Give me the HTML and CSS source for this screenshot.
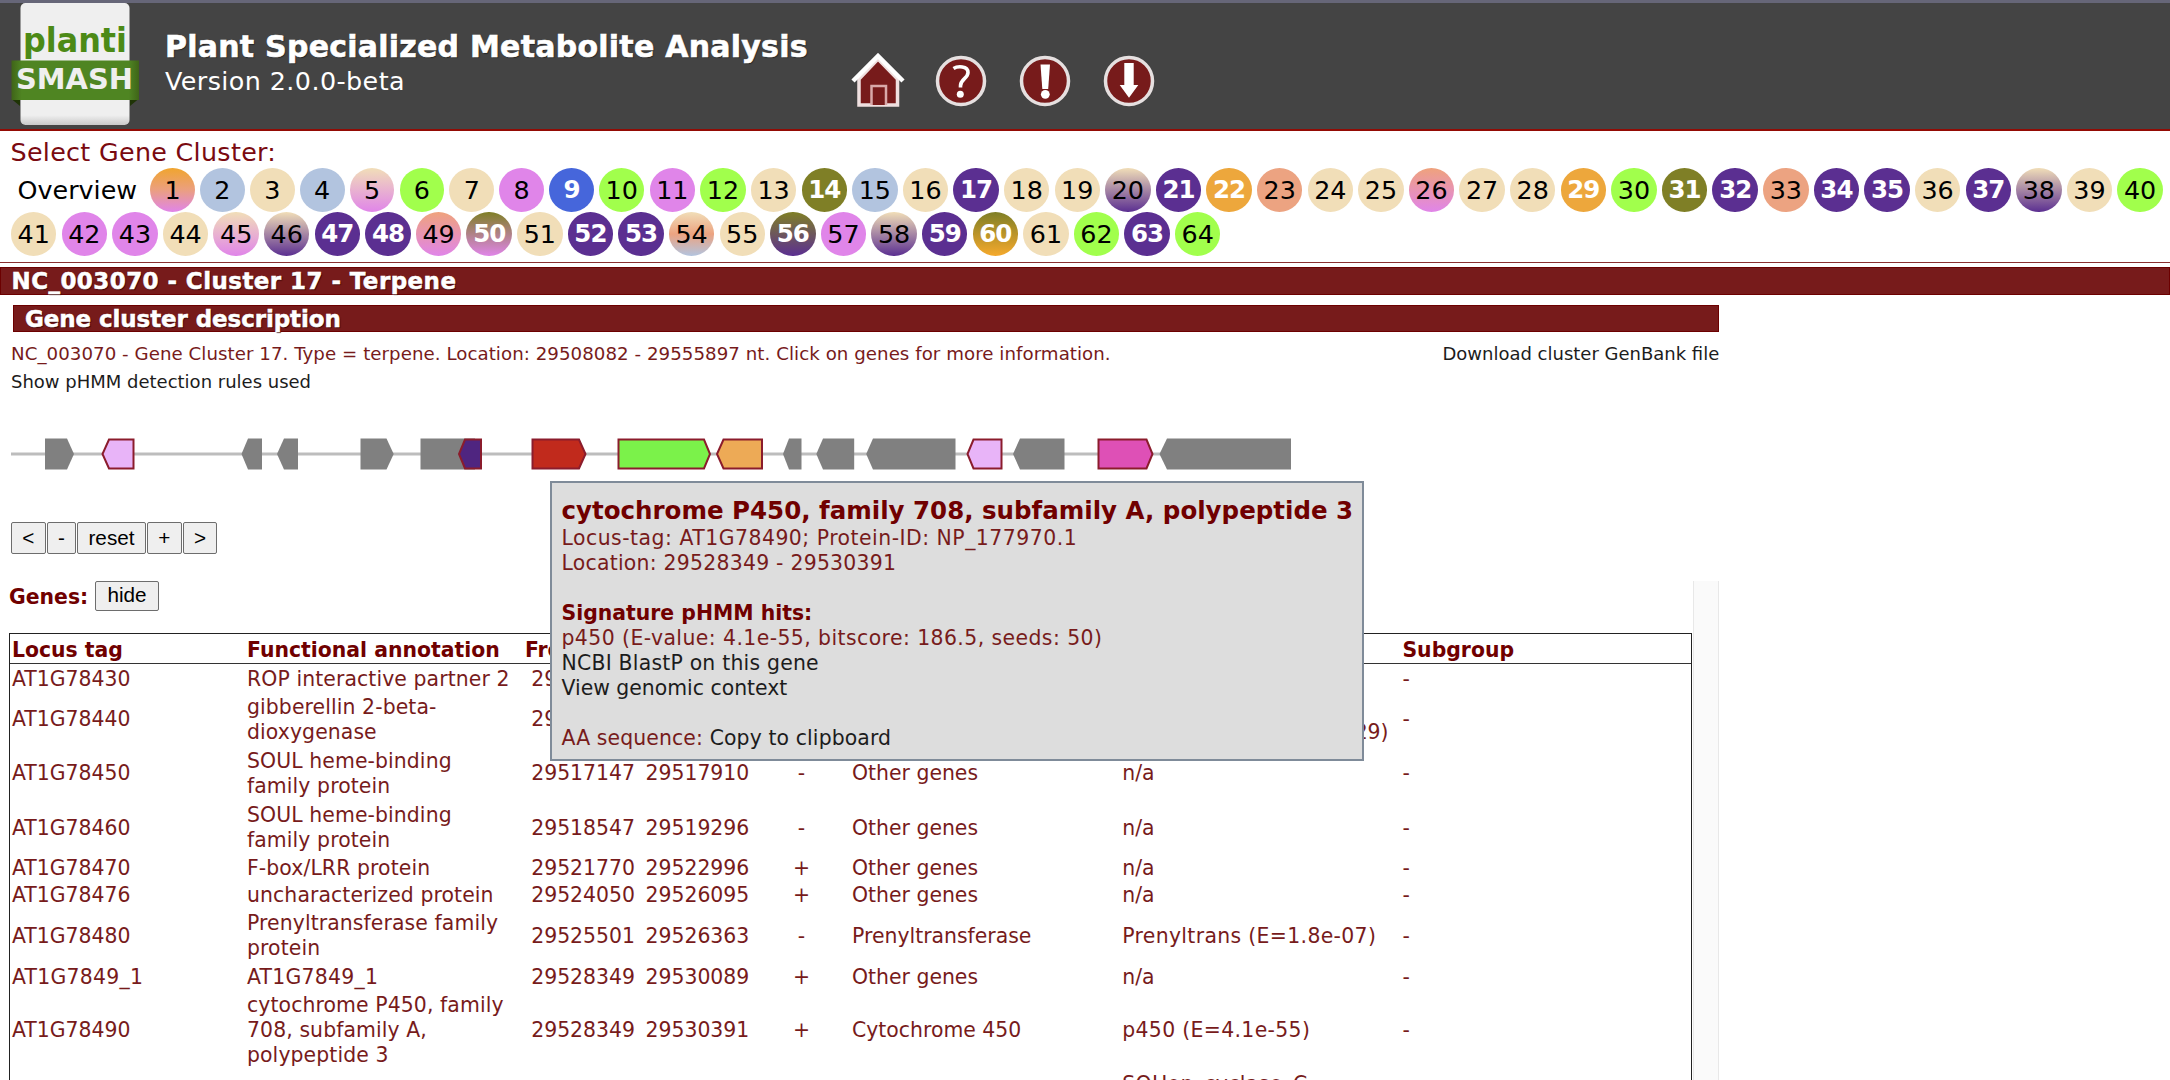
FILE: index.html
```
<!DOCTYPE html>
<html lang="en">
<head>
<meta charset="utf-8">
<title>plantiSMASH - Plant Specialized Metabolite Analysis</title>
<link rel="stylesheet" href="styles.css">
</head>
<body>
<header class="header">
  <svg class="logo" width="130" height="125" viewBox="0 0 130 125">
    <defs>
      <linearGradient id="card" x1="0" y1="0" x2="0" y2="1"><stop offset=".92" stop-color="#efefef"/><stop offset="1" stop-color="#c9c9c9"/></linearGradient>
      <linearGradient id="ribbon"><stop offset="0" stop-color="#3f6418"/><stop offset=".08" stop-color="#4f8522"/><stop offset=".92" stop-color="#4f8522"/><stop offset="1" stop-color="#3f6418"/></linearGradient>
    </defs>
    <path d="M1.500 96 L10 96 L10 103 Z M120 96 L128.500 96 L120 103 Z" fill="#1f3406"/>
    <rect x="10.500" y="0" width="109" height="122" rx="5" fill="url(#card)"/>
    <rect x="1.500" y="57.500" width="127.500" height="39.500" fill="url(#ribbon)"/>
    <text class="logo-text" x="13" y="49" font-size="33" textLength="104" lengthAdjust="spacingAndGlyphs" fill="#4c8a16">planti</text>
    <text class="logo-text" x="6" y="86" font-size="29" textLength="117" lengthAdjust="spacingAndGlyphs" fill="#efefef">SMASH</text>
  </svg>
  <div class="heading">
    <h1 class="title">Plant Specialized Metabolite Analysis</h1>
    <div class="version">Version 2.0.0-beta</div>
  </div>
  <nav class="icons">
    <svg class="icon" viewBox="-27 -28 54 56"><path d="M-19 -2V24H19.500V-2L0 -22Z" fill="#771b1b" stroke="#efe0e0" stroke-width="3.500"/><path d="M-6.500 24V5H8V24" fill="#771b1b" stroke="#d9a9a9" stroke-width="2.500"/><path d="M-25 0L0 -25L25 0" fill="none" stroke="#fff" stroke-width="4.500"/></svg>
    <svg class="icon" viewBox="-27 -28 54 56"><circle r="23.500" fill="#771b1b" stroke="#e6e0e0" stroke-width="3.500"/><path d="M-7.500 -12.500C-3.500 -15 7 -15.500 7 -8.500C7 -2.500 -.5 -2 -.5 5V6.500" fill="none" stroke="#fff" stroke-width="3.600"/><circle cx="-.7" cy="13.300" r="3.500" fill="#fff"/></svg>
    <svg class="icon" viewBox="-27 -28 54 56"><circle r="23.500" fill="#771b1b" stroke="#e6e0e0" stroke-width="3.500"/><path d="M-4.500 -16.500H5L3.200 8H-2.700Z" fill="#fff"/><circle cx=".3" cy="13.300" r="4.400" fill="#fff"/></svg>
    <svg class="icon" viewBox="-27 -28 54 56"><circle r="23.500" fill="#771b1b" stroke="#e6e0e0" stroke-width="3.500"/><path d="M-4.700 -18H4.700V4H9.300L0 16.700L-9.300 4H-4.700Z" fill="#fff"/></svg>
  </nav>
</header>

<section class="clusters">
  <div class="select-label">Select Gene Cluster:</div>
  <div class="pills first">
    <a class="overview">Overview</a>
    <a class="pill s orange-violet">1</a><a class="pill s blue">2</a><a class="pill s wheat">3</a><a class="pill s blue">4</a><a class="pill s wheat-violet">5</a><a class="pill s green">6</a><a class="pill s wheat">7</a><a class="pill s violet">8</a><a class="pill s royal">9</a><a class="pill green">10</a><a class="pill violet">11</a><a class="pill green">12</a><a class="pill wheat">13</a><a class="pill olive">14</a><a class="pill blue">15</a><a class="pill wheat">16</a><a class="pill purple">17</a><a class="pill wheat">18</a><a class="pill wheat">19</a><a class="pill wheat-purple">20</a><a class="pill purple">21</a><a class="pill orange">22</a><a class="pill salmon">23</a><a class="pill wheat">24</a><a class="pill wheat">25</a><a class="pill salmon-violet">26</a><a class="pill wheat">27</a><a class="pill wheat">28</a><a class="pill orange">29</a><a class="pill green">30</a><a class="pill olive">31</a><a class="pill purple">32</a><a class="pill salmon">33</a><a class="pill purple">34</a><a class="pill purple">35</a><a class="pill wheat">36</a><a class="pill purple">37</a><a class="pill wheat-purple">38</a><a class="pill wheat">39</a><a class="pill green">40</a>
  </div>
  <div class="pills">
    <a class="pill wheat">41</a><a class="pill violet">42</a><a class="pill violet">43</a><a class="pill wheat">44</a><a class="pill wheat-violet">45</a><a class="pill wheat-purple">46</a><a class="pill purple">47</a><a class="pill purple">48</a><a class="pill salmon-violet">49</a><a class="pill olive-violet">50</a><a class="pill wheat">51</a><a class="pill purple">52</a><a class="pill purple">53</a><a class="pill wheat-blue">54</a><a class="pill wheat">55</a><a class="pill olive-purple">56</a><a class="pill violet">57</a><a class="pill wheat-purple">58</a><a class="pill purple">59</a><a class="pill olive-orange">60</a><a class="pill wheat">61</a><a class="pill green">62</a><a class="pill purple">63</a><a class="pill green">64</a>
  </div>
</section>

<h2 class="bar page-bar">NC_003070 - Cluster 17 - Terpene</h2>

<main class="page">
  <h3 class="bar">Gene cluster description</h3>
  <div class="description">
    <div class="line"><span class="summary">NC_003070 - Gene Cluster 17. Type = terpene. Location: 29508082 - 29555897 nt. Click on genes for more information.</span><a class="link">Download cluster GenBank file</a></div>
    <a class="line link">Show pHMM detection rules used</a>
  </div>
  <div class="map">
    <svg class="genes-svg" width="1300" height="34" viewBox="0 437 1300 34">
      <path d="M11 454H1290" stroke="#bdbdbd" stroke-width="3"/>
      <g fill="#808080">
        <path d="M45 438.500H67L74 454L67 469.500H45Z"/>
        <path d="M262 438.500H248L241.500 454L248 469.500H262Z"/>
        <path d="M298 438.500H284L277 454L284 469.500H298Z"/>
        <path d="M360.500 438.500H386.500L393.700 454L386.500 469.500H360.500Z"/>
        <path d="M420.500 438.500H475V469.500H420.500Z"/>
        <path d="M801.500 438.500H789L783 454L789 469.500H801.500Z"/>
        <path d="M854.200 438.500H823L816.300 454L823 469.500H854.200Z"/>
        <path d="M955.500 438.500H873L866.200 454L873 469.500H955.500Z"/>
        <path d="M1064.500 438.500H1020L1013 454L1020 469.500H1064.500Z"/>
        <path d="M1291 438.500H1167L1159.500 454L1167 469.500H1291Z"/>
      </g>
      <g stroke="#8b1c2c" stroke-width="2">
        <path d="M133.500 439.500H109L102.500 454L109 468.500H133.500Z" fill="#e8b4f8"/>
        <path d="M481 439.500H465L459 454L465 468.500H481Z" fill="#4f2580"/>
        <path d="M532.500 439.500H579L585.500 454L579 468.500H532.500Z" fill="#c12a1c"/>
        <path d="M618.500 439.500H704L710 454L704 468.500H618.500Z" fill="#7bf24a"/>
        <path d="M762 439.500H723.500L717 454L723.500 468.500H762Z" fill="#edaa56"/>
        <path d="M1001.500 439.500H973.500L967.500 454L973.500 468.500H1001.500Z" fill="#e8b4f8"/>
        <path d="M1098.500 439.500H1146.500L1152.500 454L1146.500 468.500H1098.500Z" fill="#de50b6"/>
      </g>
    </svg>
    <div class="tooltip">
      <div class="tooltip-title">cytochrome P450, family 708, subfamily A, polypeptide 3</div>
      <div class="wide">Locus-tag: AT1G78490; Protein-ID: NP_177970.1</div>
      <div class="location">Location: 29528349 - 29530391</div>
      <b class="hits-title">Signature pHMM hits:</b>
      <div class="hit">p450 (E-value: 4.1e-55, bitscore: 186.5, seeds: 50)</div>
      <a class="link blast">NCBI BlastP on this gene</a>
      <a class="link">View genomic context</a>
      <div class="sequence">AA sequence: <span class="link">Copy to clipboard</span></div>
    </div>
  </div>
  <div class="controls">
    <button class="button b1">&lt;</button><button class="button b2">-</button><button class="button b3">reset</button><button class="button b4">+</button><button class="button b5">&gt;</button>
  </div>
  <section class="genes">
    <div class="genes-main">
      <div class="genes-head"><b>Genes:</b><button class="button hide">hide</button></div>
      <div class="table">
        <div class="row head"><div>Locus tag</div><div>Functional annotation</div><div class="from">From</div><div></div><div></div><div></div><div></div><div>Subgroup</div></div>
        <div class="row"><div>AT1G78430</div><div class="func">ROP interactive partner 2</div><div>29508082</div><div></div><div></div><div></div><div></div><div>-</div></div>
        <div class="row two"><div>AT1G78440</div><div class="func">gibberellin 2-beta-<br>dioxygenase</div><div>29511772</div><div></div><div></div><div></div><div class="oxy">DIOX_N (E=2.8e-19)<br>2OG-FeII_Oxy (E=5.7e-29)</div><div>-</div></div>
        <div class="row two"><div>AT1G78450</div><div class="func">SOUL heme-binding<br>family protein</div><div>29517147</div><div>29517910</div><div class="c">-</div><div>Other genes</div><div>n/a</div><div>-</div></div>
        <div class="row two"><div>AT1G78460</div><div class="func">SOUL heme-binding<br>family protein</div><div>29518547</div><div>29519296</div><div class="c">-</div><div>Other genes</div><div>n/a</div><div>-</div></div>
        <div class="row"><div>AT1G78470</div><div class="func">F-box/LRR protein</div><div>29521770</div><div>29522996</div><div class="c">+</div><div>Other genes</div><div>n/a</div><div>-</div></div>
        <div class="row"><div>AT1G78476</div><div class="func">uncharacterized protein</div><div>29524050</div><div>29526095</div><div class="c">+</div><div>Other genes</div><div>n/a</div><div>-</div></div>
        <div class="row two"><div>AT1G78480</div><div class="func">Prenyltransferase family<br>protein</div><div>29525501</div><div>29526363</div><div class="c">-</div><div>Prenyltransferase</div><div class="hits">Prenyltrans (E=1.8e-07)</div><div>-</div></div>
        <div class="row"><div class="tag">AT1G7849_1</div><div class="tag">AT1G7849_1</div><div>29528349</div><div>29530089</div><div class="c">+</div><div>Other genes</div><div>n/a</div><div>-</div></div>
        <div class="row three"><div>AT1G78490</div><div class="func">cytochrome P450, family<br>708, subfamily A,<br>polypeptide 3</div><div>29528349</div><div>29530391</div><div class="c">+</div><div>Cytochrome 450</div><div class="hits">p450 (E=4.1e-55)</div><div>-</div></div>
        <div class="row last"><div></div><div></div><div></div><div></div><div></div><div></div><div class="hits">SQHop_cyclase_C</div><div></div></div>
      </div>
    </div>
    <div class="scroll-track"></div>
  </section>
</main>
</body>
</html>
```
FILE: styles.css
```
* { box-sizing: border-box; }
html, body { height: 1080px; overflow: hidden; }
body {
  margin: 0;
  background: #fff;
  color: #771b1b;
  font-family: "DejaVu Sans", Verdana, sans-serif;
  font-size: 20.4px;
  line-height: 25px;
}
h1, h2, h3 { margin: 0; }
.link { color: #1c1c1c; }

.header {
  display: flex;
  height: 131.3px;
  padding-left: 10px;
  background: #444;
  border-top: 3px solid #666678;
  border-bottom: 2px solid #930b04;
}
.logo { flex: none; overflow: visible; }
.logo-text { font-family: "DejaVu Sans", sans-serif; font-weight: bold; }
.heading { width: 687px; padding: 27px 0 0 25px; color: #fff; }
.title { font-size: 30px; line-height: 34.5px; letter-spacing: .24px; -webkit-text-stroke: .6px #fff; text-shadow: 1px 1px 1px #222; }
.version { padding-top: 1.500px; font-size: 25.4px; line-height: 31px; letter-spacing: .42px; }
.icons { display: flex; gap: 29.8px; padding: 50.3px 0 0 23.6px; }
.icon { width: 54px; height: 56px; }

.clusters {
  height: 132px;
  padding-top: 6px;
  border-bottom: 1.500px solid #8a2f2f;
  font-size: 25.4px;
}
.select-label { padding-left: 10.5px; line-height: 30.3px; letter-spacing: .3px; color: #7a0a10; }
.pills { display: flex; gap: 5.2px; height: 44.5px; padding-left: 11px; color: #000; }
.pills.first { padding-left: 17.5px; }
.overview { width: 127.500px; line-height: 44.500px; }
.pill {
  flex: none;
  width: 45.43px;
  height: 44px;
  border-radius: 50%;
  line-height: 44.500px;
  text-align: center;
}
.pill.s { width: 44.7px; }
.wheat { background: #f1deb8; }
.blue { background: #b2c4df; }
.green { background: #a1ff4c; }
.violet { background: #e085e9; }
.salmon { background: #eca381; }
.royal { background: #4666db; }
.olive { background: #7f7f26; }
.purple { background: #5b2f91; }
.orange { background: #eda73c; }
.orange-violet { background: linear-gradient(#f0a52e, #eb9f80 50%, #e085e9); }
.wheat-violet { background: linear-gradient(#f1deb8, #e085e9); }
.wheat-purple { background: linear-gradient(#f1deb8, #5b2f91); }
.salmon-violet { background: linear-gradient(#efa27c, #e085e9); }
.olive-violet { background: linear-gradient(#7f7f26, #e085e9); }
.olive-purple { background: linear-gradient(#7f7f26, #5b2f91); }
.olive-orange { background: linear-gradient(#7f7f26, #f5a92c); }
.wheat-blue { background: linear-gradient(#f1deb8, #eca381 50%, #b2c4df); }
.royal, .olive, .purple, .orange, .olive-violet, .olive-purple, .olive-orange { color: #fff; font-size: 24.500px; font-weight: bold; letter-spacing: -1px; }

.bar {
  height: 27.7px;
  padding-left: 12px;
  border: 1.500px solid #6c0000;
  background: #771b1b;
  color: #fff;
  font-size: 23px;
  line-height: 27px;
  -webkit-text-stroke: .5px #fff;
  text-shadow: 1px 1px 1px #300;
}
.page-bar { margin-top: 4px; padding-left: 10.5px; letter-spacing: .43px; }

.page { width: 1719.300px; }
.page > .bar { margin: 9.700px 0 0 13px; padding-left: 11px; letter-spacing: -.1px; }
.description { padding: 7.200px 0 0 11px; font-size: 18px; line-height: 28.600px; }
.line { display: flex; justify-content: space-between; }
.summary { font-size: 18.200px; letter-spacing: .05px; }

.map { position: relative; padding-top: 40px; }
.genes-svg { display: block; }
.tooltip {
  position: absolute;
  z-index: 1;
  left: 549.500px;
  top: 84.500px;
  width: 814.500px;
  height: 280px;
  padding: 13px 0 0 10px;
  border: 2px solid #7f8b99;
  background: #ddd;
  white-space: nowrap;
}
.tooltip > * { display: block; }
.tooltip-title { font-size: 24.500px; line-height: 29.500px; font-weight: bold; color: #700000; }
.wide { letter-spacing: .5px; }
.location { letter-spacing: .25px; }
.hit { letter-spacing: .43px; }
.blast { letter-spacing: .22px; }
.hits-title { margin-top: 25px; color: #700000; }
.sequence { margin-top: 25px; letter-spacing: .12px; }

.controls { display: flex; gap: 1px; padding: 51px 0 0 11px; }
.button {
  height: 32px;
  padding: 0;
  border: 1.500px solid #6d6d6d;
  border-radius: 2px;
  background: #efefef;
  color: #000;
  font: 20.700px/28px "Liberation Sans", Arial, sans-serif;
}
.b1, .b4, .b5 { width: 34.700px; }
.b2 { width: 29.300px; }
.b3 { width: 69px; }

.genes { display: flex; height: 499px; margin-top: 27px; }
.genes-main { width: 1683.500px; margin-left: 9px; }
.scroll-track { width: 26.500px; background: #fafafa; border: solid #e8e8e8; border-width: 0 1.500px; }
.genes-head { display: flex; gap: 7px; height: 52px; line-height: 32px; color: #700000; }
.hide { width: 63.500px; height: 30px; padding-bottom: 2px; line-height: 24px; }

.table { width: 1683px; height: 447px; overflow: hidden; border: 1.500px solid #222; border-bottom: 0; }
.row {
  display: grid;
  grid-template-columns: 235px 284.200px 114.300px 105.400px 101.200px 270.200px 280.200px 1fr;
  align-items: center;
  height: 27.100px;
  padding-left: 2px;
  white-space: nowrap;
}
.head { height: 30px; margin-bottom: 1.800px; padding-top: 4px; border-bottom: 1.500px solid #333; color: #700000; font-weight: bold; }
.two { height: 54.200px; }
.three { height: 80.400px; }
.last { height: 80px; align-items: start; padding-top: 1px; }
.from { margin-left: -6.300px; }
.func { letter-spacing: .1px; }
.tag { letter-spacing: .25px; }
.hits { letter-spacing: .34px; }
.oxy { letter-spacing: -.1px; }
.c { text-align: center; }
```
